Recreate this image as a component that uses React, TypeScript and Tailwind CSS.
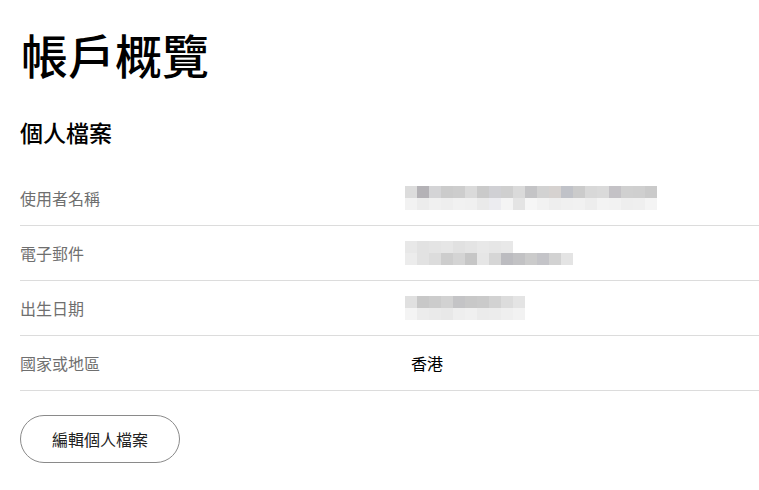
const font = { fontFamily: '"Noto Sans CJK TC", "Noto Sans", sans-serif' };

// pixelated (mosaic) placeholders for the hidden values
const mosaic: Record<string, string[][]> = {
  username: [
    ['#dcdcdc', '#b4b2b6', '#d4d4d6', '#cbcbcb', '#cdcdcd', '#dadada', '#cacaca', '#d0d0d4', '#cfcfcf', '#dadada', '#c4c4c6', '#d2d2d2', '#d6d2d0', '#c0c2c8', '#cbcbcb', '#d8d8d8', '#dadada', '#c4c2c6', '#d0d0d0', '#cfcfcf', '#cacaca'],
    ['#f2f2f2', '#ececec', '#f0f0f0', '#eeeeee', '#f1f1f1', '#f0f0f0', '#eaeaea', '#ececf0', '#f4f4f4', '#e4e4e4', '#f6f6f6', '#f2f2f2', '#eeeeee', '#f0f0f0', '#f1f1f1', '#ededed', '#f3f3f3', '#f2f2f2', '#eeeeee', '#efefef', '#f4f4f4'],
  ],
  email: [
    ['#e8e8e8', '#e2e2e2', '#e4e4e4', '#e6e6e6', '#e1e1e1', '#e4e4e4', '#e8e8e8', '#e6e6e6', '#e8e8e8', '#ffffff', '#ffffff', '#ffffff', '#ffffff', '#ffffff'],
    ['#ececec', '#e2e2e2', '#dcdcdc', '#cdcdcd', '#d4d4d4', '#c6c6c6', '#e6e6e6', '#d6d6d6', '#bcbcc0', '#c2c2c4', '#cbcbcb', '#c4c4c8', '#d2d2d2', '#e4e4e4'],
  ],
  birth: [
    ['#e0e0e0', '#c8c8c8', '#cccccc', '#d2d2d2', '#c4c4c6', '#c8c8c8', '#cacaca', '#d2d2d2', '#dcdcdc', '#e4e4e4'],
    ['#f4f4f4', '#ececec', '#eaeaea', '#e8e8e8', '#eeeeee', '#f0f0f0', '#ebebeb', '#ececec', '#efefef', '#f2f2f2'],
  ],
};

function Mosaic({ rows }: { rows: string[][] }) {
  return (
    <div className="flex flex-col blur-[0.6px]">
      {rows.map((row, r) => (
        <div key={r} className="flex">
          {row.map((c, i) => (
            <div key={i} className="w-3 h-3" style={{ backgroundColor: c }} />
          ))}
        </div>
      ))}
    </div>
  );
}

interface Row {
  label: string;
  value?: string;
  hidden?: string;
}

const rows: Row[] = [
  { label: '使用者名稱', hidden: 'username' },
  { label: '電子郵件', hidden: 'email' },
  { label: '出生日期', hidden: 'birth' },
  { label: '國家或地區', value: '香港' },
];

export default function App() {
  return (
    <div className="w-[759px] h-[490px] bg-white pl-5 text-black overflow-hidden" style={font}>
      <h1 className="mt-[26px] pl-[1px] text-[47px] leading-[55px] font-medium">帳戶概覽</h1>
      <h2 className="mt-[35px] text-[23px] leading-[32px] font-medium">個人檔案</h2>
      <div className="mt-[23px]">
        {rows.map((row) => (
          <div key={row.label} className="flex items-center h-[55px] border-b border-[#dcdcdc]">
            <div className="w-[391px] text-[16px] text-[#6f6f6f]">{row.label}</div>
            <div className="text-[16px] text-black">
              {row.hidden ? (
                <div className="-ml-[6px]">
                  <Mosaic rows={mosaic[row.hidden]} />
                </div>
              ) : (
                row.value
              )}
            </div>
          </div>
        ))}
      </div>
      <button className="mt-[24px] w-[160px] h-[48px] rounded-full border border-[#8a8a8a] text-[16px] text-[#222]">
        編輯個人檔案
      </button>
    </div>
  );
}
